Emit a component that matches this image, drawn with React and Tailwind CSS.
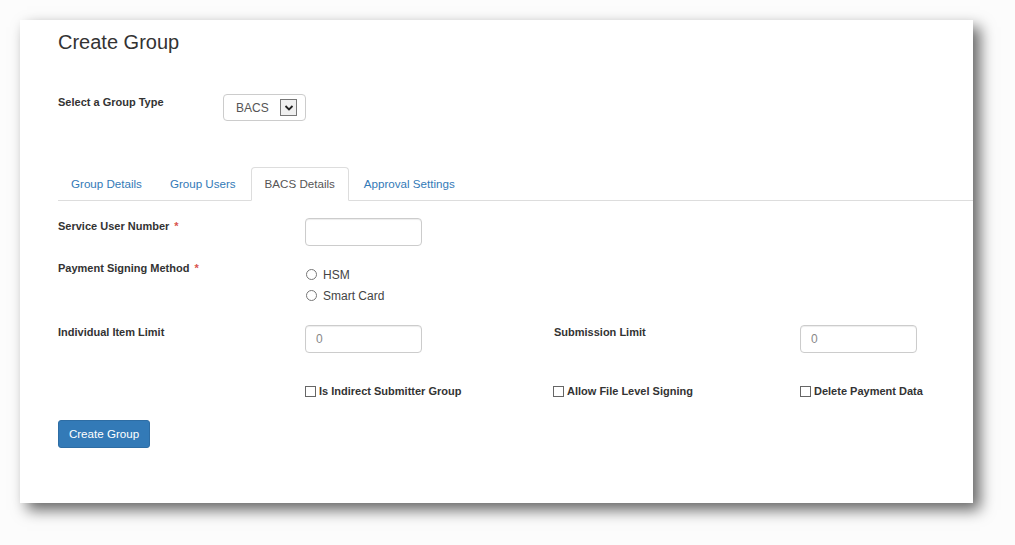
import React from 'react';

const font = { fontFamily: '"Liberation Sans", Arial, sans-serif' };

const Label = ({ children, required }) => (
    <div className="text-[11px] leading-[16px] font-bold text-[#333]">
        {children}
        {required && <span className="text-[#d9534f] ml-[5px]">*</span>}
    </div>
);

const TextInput = ({ value }) => (
    <input
        type="text"
        readOnly
        defaultValue={value}
        className="w-[117px] h-[28px] border border-[#ccc] rounded-[4px] px-[10px] text-[12px] text-[#888] shadow-[inset_0_1px_1px_rgba(0,0,0,0.075)] outline-none bg-white"
    />
);

const Radio = ({ label }) => (
    <label className="flex items-center h-[21px] text-[12px] text-[#444]">
        <span className="w-[11px] h-[11px] rounded-full border border-[#777] bg-white ml-[1px] mr-[6px]"></span>
        {label}
    </label>
);

const Check = ({ label }) => (
    <label className="flex items-center text-[11px] leading-[16px] font-bold text-[#333]">
        <span className="w-[11px] h-[11px] border border-[#666] bg-white mr-[3px]"></span>
        {label}
    </label>
);

const tabs = ['Group Details', 'Group Users', 'BACS Details', 'Approval Settings'];

const App = () => {
    return (
        <div className="w-[1015px] h-[545px] bg-[#fcfcfc] pt-[20px] pl-[20px] overflow-hidden" style={font}>
            <div className="w-[953px] h-[483px] bg-white shadow-[7px_7px_14px_rgba(0,0,0,0.6)] pl-[38px] pt-[8px] overflow-hidden">
                {/* title */}
                <h1 className="text-[20px] leading-[28px] text-[#333]">Create Group</h1>

                {/* group type */}
                <div className="flex items-start mt-[38px]">
                    <div className="w-[165px]">
                        <Label>Select a Group Type</Label>
                    </div>
                    <div className="w-[83px] h-[27px] border border-[#ccc] rounded-[4px] flex items-center pl-[12px] pr-[8px] justify-between">
                        <span className="text-[12px] text-[#555]">BACS</span>
                        <span className="w-[17px] h-[17px] border border-[#777] bg-[#f0f0f0] flex items-center justify-center">
                            <svg width="10" height="8" viewBox="0 0 10 8">
                                <path d="M1.5 2 L5 5.5 L8.5 2" fill="none" stroke="#222" strokeWidth="1.8" />
                            </svg>
                        </span>
                    </div>
                </div>

                {/* tabs */}
                <div className="flex mt-[46px] border-b border-[#ddd] h-[34px]">
                    {tabs.map((t) => (
                        <div
                            key={t}
                            className={
                                t === 'BACS Details'
                                    ? 'px-[13px] mr-[2px] h-[34px] flex items-center text-[11.6px] text-[#555] bg-white border border-[#ddd] border-b-white rounded-t-[4px]'
                                    : 'px-[13px] mr-[2px] h-[33px] flex items-center text-[11.6px] text-[#337ab7]'
                            }
                        >
                            {t}
                        </div>
                    ))}
                </div>

                {/* service user number */}
                <div className="flex items-start mt-[17px]">
                    <div className="w-[247px]">
                        <Label required>Service User Number</Label>
                    </div>
                    <TextInput value="" />
                </div>

                {/* payment signing */}
                <div className="flex items-start mt-[14px]">
                    <div className="w-[247px]">
                        <Label required>Payment Signing Method</Label>
                    </div>
                    <div className="pt-[4px]">
                        <Radio label="HSM" />
                        <Radio label="Smart Card" />
                    </div>
                </div>

                {/* limits */}
                <div className="flex items-start mt-[18px]">
                    <div className="w-[247px]">
                        <Label>Individual Item Limit</Label>
                    </div>
                    <div className="w-[249px] pt-[1px]">
                        <TextInput value="0" />
                    </div>
                    <div className="w-[246px]">
                        <Label>Submission Limit</Label>
                    </div>
                    <div className="pt-[1px]">
                        <TextInput value="0" />
                    </div>
                </div>

                {/* checkboxes */}
                <div className="flex items-start mt-[30px] pl-[247px]">
                    <div className="w-[248px]">
                        <Check label="Is Indirect Submitter Group" />
                    </div>
                    <div className="w-[247px]">
                        <Check label="Allow File Level Signing" />
                    </div>
                    <div>
                        <Check label="Delete Payment Data" />
                    </div>
                </div>

                {/* submit */}
                <button className="mt-[21px] w-[92px] h-[28px] bg-[#337ab7] border border-[#2e6da4] rounded-[3px] text-white text-[11.6px]">
                    Create Group
                </button>
            </div>
        </div>
    );
};

export default App;
